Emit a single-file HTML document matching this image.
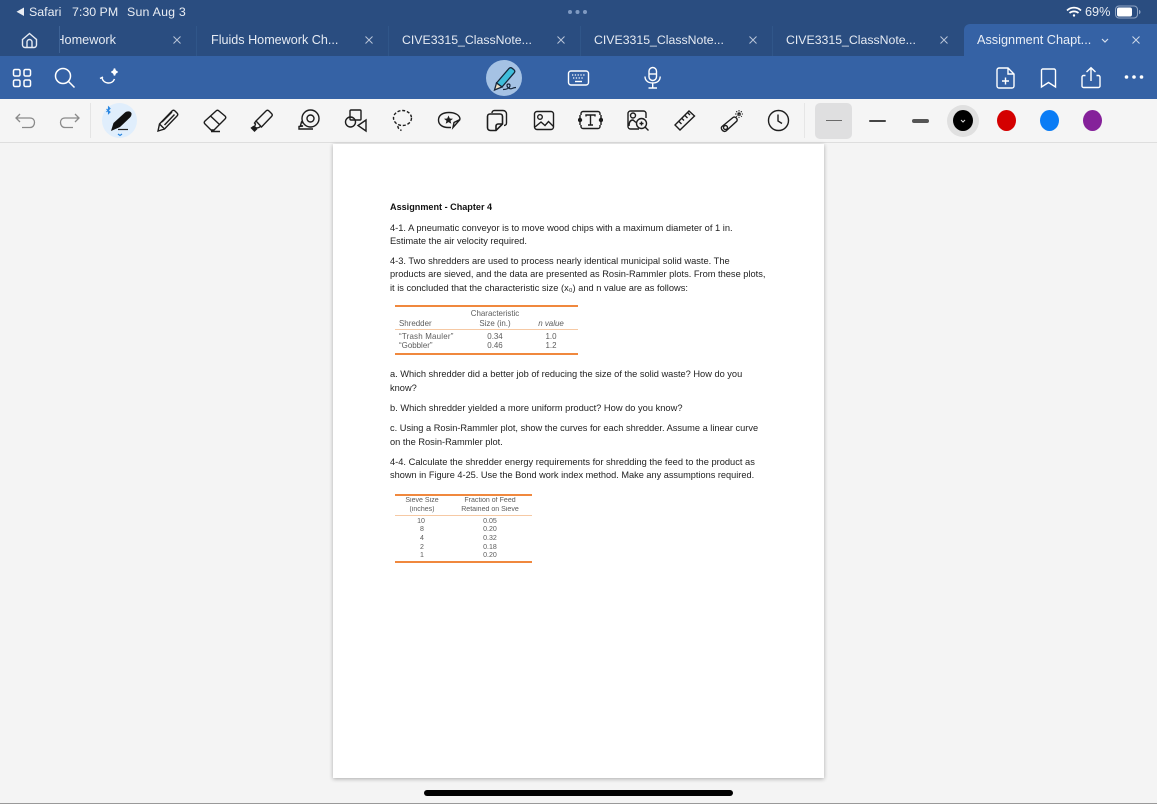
<!DOCTYPE html>
<html><head><meta charset="utf-8"><style>
html,body{margin:0;padding:0}
body{width:1157px;height:804px;position:relative;overflow:hidden;background:#f4f4f4;font-family:"Liberation Sans",sans-serif}
div,span,svg{position:absolute}
svg{filter:blur(.25px)}
.t{white-space:nowrap;color:#e9edf3;top:5px;font-size:12.4px;filter:blur(.2px)}
.tab{top:33px;font-size:12.6px;color:#e6ebf3;white-space:nowrap;filter:blur(.2px)}
.n{font-size:12.3px}
.x{top:36px}
.p{position:absolute;left:390px;font-size:9.27px;color:#222;white-space:nowrap;line-height:12px;filter:blur(.3px)}
.s{position:absolute;font-size:7.95px;color:#5c5c5c;white-space:nowrap;line-height:9px;filter:blur(.3px)}
.sm{font-size:7.05px}
.c{transform:translateX(-50%);text-align:center}
.o{position:absolute;background:#f0883e}
.ol{position:absolute;background:#f6c9a4}
</style></head><body>
<div style="left:0;top:0;width:1157px;height:56px;background:#2a4d80"></div>
<div style="left:0;top:56px;width:1157px;height:43px;background:#3562a5"></div>
<div style="left:0;top:99px;width:1157px;height:43px;background:#f5f5f5;border-bottom:1px solid #dedede"></div>
<div style="left:964px;top:24px;width:193px;height:32px;background:#3562a5;border-radius:6px 0 0 0"></div>

<svg style="left:16px;top:7px" width="9" height="10"><path d="M8 .5v8.500L.5 4.700z" fill="#e9edf3"/></svg>
<div class="t" style="left:29px">Safari</div>
<div class="t" style="left:72px">7:30 PM</div>
<div class="t" style="left:127px;letter-spacing:.2px">Sun Aug 3</div>
<svg style="left:565px;top:8px" width="26" height="8"><circle cx="5" cy="4" r="2" fill="#7f9ac2"/><circle cx="12.500" cy="4" r="2" fill="#7f9ac2"/><circle cx="20" cy="4" r="2" fill="#7f9ac2"/></svg>
<svg style="left:1066px;top:5px" width="16" height="13" fill="none" stroke="#fff" stroke-width="1.700"><path d="M1 5.500C5 1.700 11 1.700 15 5.500M3.500 8C6 5.800 10 5.800 12.500 8"/><circle cx="8" cy="10.500" r="1.200" fill="#fff" stroke="none"/></svg>
<div class="t" style="left:1085px;font-size:12.7px">69%</div>
<svg style="left:1115px;top:5px" width="27" height="14"><rect x=".5" y="1" width="22" height="12" rx="3.500" fill="none" stroke="#8fa4c3"/><rect x="2" y="2.500" width="15" height="9" rx="2" fill="#fff"/><path d="M24 5v4c1 0 1.500-1 1.500-2S25 5 24 5z" fill="#8fa4c3"/></svg>

<svg style="left:21px;top:32px" width="17" height="17" fill="none" stroke="#e6ebf3" stroke-width="1.400"><path d="M1.500 7.500 8.500 1.500 15.500 7.500V13a2.500 2.500 0 0 1-2.500 2.500H4A2.500 2.500 0 0 1 1.500 13zM6 15.500V10a2.500 2.500 0 0 1 5 0v5.500"/></svg>
<div style="left:59px;top:26px;width:1px;height:27px;background:#3e6396"></div>
<div class="tab" style="left:60px;width:56px;overflow:hidden;direction:rtl;font-size:12.7px">Homework</div>
<svg class="x" style="left:173px" width="8" height="8" stroke="#b9c5d8" stroke-width="1"><path d="M.5.5l7 7M7.500.5l-7 7"/></svg>
<div style="left:196px;top:26px;width:1px;height:30px;background:#305689"></div>
<div class="tab" style="left:211px">Fluids Homework Ch...</div>
<svg class="x" style="left:365px" width="8" height="8" stroke="#b9c5d8" stroke-width="1"><path d="M.5.5l7 7M7.500.5l-7 7"/></svg>
<div style="left:388px;top:26px;width:1px;height:30px;background:#305689"></div>
<div class="tab n" style="left:402px">CIVE3315_ClassNote...</div>
<svg class="x" style="left:557px" width="8" height="8" stroke="#b9c5d8" stroke-width="1"><path d="M.5.5l7 7M7.500.5l-7 7"/></svg>
<div style="left:580px;top:26px;width:1px;height:30px;background:#305689"></div>
<div class="tab n" style="left:594px">CIVE3315_ClassNote...</div>
<svg class="x" style="left:749px" width="8" height="8" stroke="#b9c5d8" stroke-width="1"><path d="M.5.5l7 7M7.500.5l-7 7"/></svg>
<div style="left:772px;top:26px;width:1px;height:30px;background:#305689"></div>
<div class="tab n" style="left:786px">CIVE3315_ClassNote...</div>
<svg class="x" style="left:940px" width="8" height="8" stroke="#b9c5d8" stroke-width="1"><path d="M.5.5l7 7M7.500.5l-7 7"/></svg>
<div class="tab" style="left:977px;color:#e9eef6;font-size:12.7px">Assignment Chapt...</div>
<svg style="left:1100px;top:37px" width="10" height="7" fill="none" stroke="#d7e0ee" stroke-width="1.200"><path d="M2 2l3 3 3-3"/></svg>
<svg class="x" style="left:1132px" width="8" height="8" stroke="#cdd8e8" stroke-width="1"><path d="M.5.5l7 7M7.500.5l-7 7"/></svg>

<svg style="left:12px;top:68px" width="20" height="20" fill="none" stroke="#fff" stroke-width="1.500"><rect x="1.500" y="1.500" width="6.500" height="6.500" rx="1.500"/><rect x="12" y="1.500" width="6.500" height="6.500" rx="1.500"/><rect x="1.500" y="12" width="6.500" height="6.500" rx="1.500"/><rect x="12" y="12" width="6.500" height="6.500" rx="1.500"/></svg>
<svg style="left:54px;top:67px" width="22" height="22" fill="none" stroke="#fff" stroke-width="1.500"><circle cx="9" cy="9" r="7.500"/><path d="M14.500 14.500l6 6"/></svg>
<svg style="left:98px;top:67px" width="22" height="20" fill="none" stroke="#fff" stroke-width="1.500"><path d="M2 11.500l3-1.500M4 11c1.500 6 10 7 12.500 1"/><path d="M16.500 1.500c.4 2.300 1 3 3 3.500-2 .5-2.600 1.200-3 3.500-.4-2.300-1-3-3-3.500 2-.5 2.600-1.200 3-3.500z" fill="#fff"/></svg>

<div style="left:486px;top:60px;width:36px;height:36px;border-radius:50%;background:#a5c2e4"></div>
<svg style="left:492px;top:64px" width="26" height="28"><path d="M4.500 19 17 4.500c1-1 2-1 3-.3l2 1.600c1 .9 1 2 .2 3L10 23z" fill="#3fbddb" stroke="#16263a" stroke-width="1.300"/><path d="M4.500 19l-2 7 7.500-3z" fill="#f1e2c4" stroke="#16263a" stroke-width="1.300"/><path d="M11 25.500c3 0 7-1 7-4 0-2-3-2-3 0s3 4 5 3 2-1 4-1" fill="none" stroke="#16263a" stroke-width="1.200"/></svg>
<svg style="left:567px;top:69px" width="23" height="18" fill="none" stroke="#fff" stroke-width="1.400"><rect x="1.500" y="2" width="20" height="14" rx="2.500"/><path d="M5 6h13M6 9h11" stroke-width="1.300" stroke-dasharray="1.300 1.500"/><path d="M8 12.500h7"/></svg>
<svg style="left:643px;top:66px" width="19" height="24" fill="none" stroke="#fff" stroke-width="1.400"><rect x="6" y="1.500" width="7.500" height="13" rx="3.700"/><path d="M6 8h7.500"/><path d="M2 10.500c0 4 3 6.500 7.700 6.500s7.500-2.500 7.500-6.500M9.700 17v4.500M5.500 22h8.500"/></svg>
<svg style="left:995px;top:66px" width="21" height="24" fill="none" stroke="#fff" stroke-width="1.400"><path d="M4 2h9l6 6v12a2 2 0 0 1-2 2H4a2 2 0 0 1-2-2V4a2 2 0 0 1 2-2zM13 2v6h6M10.500 11.500v7M7 15h7"/></svg>
<svg style="left:1039px;top:67px" width="19" height="22" fill="none" stroke="#fff" stroke-width="1.400"><path d="M3.500 2h11.500a1.500 1.500 0 0 1 1.500 1.500V20l-7-4.500L2.500 20V3.500A1.500 1.500 0 0 1 3.500 2z"/></svg>
<svg style="left:1080px;top:66px" width="22" height="23" fill="none" stroke="#fff" stroke-width="1.400"><path d="M11 15V2M6.500 6 11 1.700 15.500 6M5.500 9.500H3.500A1.500 1.500 0 0 0 2 11v9a1.500 1.500 0 0 0 1.500 1.500h15A1.500 1.500 0 0 0 20 20v-9a1.500 1.500 0 0 0-1.500-1.500h-2"/></svg>
<svg style="left:1124px;top:74px" width="20" height="6" fill="#fff"><circle cx="2.500" cy="3" r="1.800"/><circle cx="10" cy="3" r="1.800"/><circle cx="17.500" cy="3" r="1.800"/></svg>

<svg style="left:14px;top:112px" width="24" height="18" fill="none" stroke="#8a8a8a" stroke-width="1.300"><path d="M6 2 2 6l4 4M2 6h14c3 0 4.500 2 4.500 4.500S19 15.500 16 15.500H8"/></svg>
<svg style="left:57px;top:112px" width="24" height="18" fill="none" stroke="#8a8a8a" stroke-width="1.300"><path d="M18 2l4 4-4 4M22 6H8c-3 0-4.500 2-4.500 4.500S5 15.500 8 15.500h8"/></svg>
<div style="left:90px;top:103px;width:1px;height:35px;background:#e4e4e4"></div>
<div style="left:102px;top:103px;width:35px;height:35px;border-radius:50%;background:#e0eefc"></div>
<svg style="left:104px;top:104px" width="32" height="34"><path d="M2.500 5l3.500 3-1.500 1.500V3l1.500 1.500L2.500 8" fill="none" stroke="#2a86e0" stroke-width="1.100"/><path d="M7 27l2.500-8L21 8.500c2-1.800 6-1.500 6.500 1 .2 1.300-.5 2.800-1.500 4L16 23z" fill="#111"/><path d="M14 25.500h10" stroke="#222" stroke-width="1.200"/><path d="M14 30l2 1.500 2-1.500" fill="none" stroke="#2a86e0" stroke-width="1.200"/></svg>
<svg style="left:155px;top:108px" width="24" height="25" fill="none" stroke="#1d1d1d" stroke-width="1.400"><path d="M3 23l1.500-7L17 3c1-1 2-1 3 0l2 2c1 1 1 2 0 3L9.500 21zM4.500 16l5 5M7 14l10-10M9.500 17 19.500 6.500"/></svg>
<svg style="left:202px;top:108px" width="25" height="25" fill="none" stroke="#1d1d1d" stroke-width="1.400"><path d="M9 22 3 16c-1-1-1-2 0-3L14 3c1-1 2-1 3 0l6 5c1 1 1 2 0 3L12 22zM8.500 8l9 8.500M9 23.500h9"/></svg>
<svg style="left:249px;top:108px" width="25" height="25" fill="none" stroke="#1d1d1d" stroke-width="1.400"><path d="M7 13 17 3c1-1 2-1 3 0l2.500 2.500c1 1 1 2 0 3L12.500 19zM7 13l-1.500 2 1 1-1 3 2 1 2.500-.5.500-.5 1.500-.5"/><path d="M2.500 20l3 3 2-2-3-2.500z" fill="#1d1d1d"/></svg>
<svg style="left:297px;top:108px" width="24" height="24" fill="none" stroke="#1d1d1d" stroke-width="1.400"><circle cx="13.500" cy="10.500" r="8.500"/><circle cx="13.500" cy="10.500" r="3.500"/><path d="M6 15l-1.500-1-1 3.500L6 18l-4 .5V21h14"/></svg>
<svg style="left:344px;top:108px" width="24" height="25" fill="none" stroke="#1d1d1d" stroke-width="1.400"><rect x="6" y="2" width="11" height="10" rx="1"/><circle cx="6.500" cy="14" r="5"/><path d="M22 12v11l-8-5.500z"/></svg>
<svg style="left:391px;top:108px" width="23" height="25" fill="none" stroke="#1d1d1d" stroke-width="1.400" stroke-dasharray="3 1.800"><ellipse cx="11.500" cy="10" rx="9" ry="7.500"/><path d="M7 18c-.5 2 1 3 3.500 4.500"/></svg>
<svg style="left:437px;top:108px" width="25" height="24" fill="none" stroke="#1d1d1d" stroke-width="1.400"><path d="M14 19.500H11C6 19.500 1.500 17 1.500 12S6 4.500 12 4.500 23 7 23 11.500M23 11.500l-7 8 1-5z"/><path d="M11.500 7.500l1.300 3 3.200.2-2.500 2 .8 3-2.800-1.600L8.700 15.700l.8-3-2.500-2 3.200-.2z" fill="#1d1d1d" stroke="none"/></svg>
<svg style="left:486px;top:109px" width="22" height="23" fill="none" stroke="#1d1d1d" stroke-width="1.400"><path d="M6 4c0-1.500 1-2.500 2.500-2.500H17c2 0 3.500 1.500 3.500 3.500v9c0 1.500-1 2.500-2.500 2.500"/><path d="M4 5h10c1.500 0 2.500 1 2.500 2.500V15L10 21.500H4.500C2.500 21.500 1.500 20 1.500 18.500V7.500C1.500 6 2.500 5 4 5zM16.500 15H12c-1 0-2 1-2 2v4.500" stroke-width="1.600"/></svg>
<svg style="left:533px;top:110px" width="22" height="21" fill="none" stroke="#1d1d1d" stroke-width="1.400"><rect x="1.500" y="1.500" width="19" height="18" rx="2.500"/><circle cx="7" cy="7" r="2.300"/><path d="M2 17l6-5 4 3.500 3.500-4 5 5"/></svg>
<svg style="left:578px;top:110px" width="25" height="21" fill="none" stroke="#1d1d1d" stroke-width="1.400"><path d="M3 5V3.500A2 2 0 0 1 5 1.500h15a2 2 0 0 1 2 2V5M3 15v1.500a2 2 0 0 0 2 2h15a2 2 0 0 0 2-2V15M2 5v10M23 5v10M8 6.500V5h9v1.500M12.500 5v10M10 15h5"/><circle cx="2" cy="10" r="1.500" fill="#1d1d1d"/><circle cx="23" cy="10" r="1.500" fill="#1d1d1d"/></svg>
<svg style="left:626px;top:109px" width="24" height="23" fill="none" stroke="#1d1d1d" stroke-width="1.400"><path d="M13 20H4.500a2.500 2.500 0 0 1-2.500-2.500v-13A2.500 2.500 0 0 1 4.500 2h13A2.500 2.500 0 0 1 20 4.500V9"/><circle cx="7" cy="6.500" r="2.500"/><path d="M3 17c0-5 2-6 4-6l3 2.500"/><circle cx="15.500" cy="14.500" r="5"/><path d="M19 18l3.500 3.500M13.500 14.500h4M15.500 12.500v4"/></svg>
<svg style="left:673px;top:109px" width="23" height="23" fill="none" stroke="#1d1d1d" stroke-width="1.400"><path d="M2 16 16 2l5.500 5L7 21zM6 12.500l2.500 2.500M9 9.500l2 2M12 6.500l2.500 2.500M15 4l2 2"/></svg>
<svg style="left:719px;top:108px" width="26" height="26" fill="none" stroke="#1d1d1d" stroke-width="1.400"><path d="M3 18.500 14 9.500c1-.8 2.500-.6 3.500.7s.8 2.700-.3 3.500L7 23c-1 .8-2.800.4-3.800-.9S2 19.300 3 18.500z"/><circle cx="6.500" cy="19.500" r="2"/><path d="M20 2v8M16 6h8M17.200 3.200l5.600 5.600M22.800 3.200l-5.600 5.600" stroke-width="1" stroke-dasharray="1.500 .8"/></svg>
<svg style="left:767px;top:109px" width="23" height="23" fill="none" stroke="#1d1d1d" stroke-width="1.400"><circle cx="11.500" cy="11.500" r="10"/><path d="M11 5.500v6.500l4 2.500"/></svg>
<div style="left:804px;top:103px;width:1px;height:35px;background:#e6e6e6"></div>
<div style="left:815px;top:103px;width:37px;height:36px;border-radius:5px;background:#dfdfe0"></div>
<div style="left:826px;top:120px;width:16px;height:1px;background:#6a6a6a"></div>
<div style="left:869px;top:120px;width:17px;height:2px;border-radius:1px;background:#444"></div>
<div style="left:912px;top:119px;width:17px;height:4px;border-radius:2px;background:#555"></div>
<div style="left:947px;top:105px;width:32px;height:32px;border-radius:50%;background:#e0e0e0"></div>
<div style="left:953px;top:110px;width:20px;height:21px;border-radius:50%;background:#000"></div>
<svg style="left:959px;top:118px" width="8" height="6" fill="none" stroke="#ddd" stroke-width="1"><path d="M2 2l2 2 2-2"/></svg>
<div style="left:997px;top:110px;width:19px;height:21px;border-radius:50%;background:#d40000"></div>
<div style="left:1040px;top:110px;width:19px;height:21px;border-radius:50%;background:#0a7cf5"></div>
<div style="left:1083px;top:110px;width:19px;height:21px;border-radius:50%;background:#85219a"></div>

<div style="left:333px;top:144px;width:491px;height:634px;background:#fff;box-shadow:0 1px 4px rgba(0,0,0,.3)"></div>
<p class="p" style="margin:0;top:200.500px;font-weight:bold;color:#111;font-size:9.1px">Assignment - Chapter 4</p>
<p class="p" style="margin:0;top:221.500px;font-size:9.3px">4-1. A pneumatic conveyor is to move wood chips with a maximum diameter of 1 in.</p>
<p class="p" style="margin:0;top:234.500px">Estimate the air velocity required.</p>
<p class="p" style="margin:0;top:254.500px;font-size:9.3px">4-3. Two shredders are used to process nearly identical municipal solid waste. The</p>
<p class="p" style="margin:0;top:268px">products are sieved, and the data are presented as Rosin-Rammler plots. From these plots,</p>
<p class="p" style="margin:0;top:281.500px">it is concluded that the characteristic size (x₀) and n value are as follows:</p>

<div class="o" style="left:395px;top:305px;width:183px;height:2px"></div>
<div class="s c" style="left:495px;top:309px">Characteristic</div>
<div class="s" style="left:399px;top:319px">Shredder</div><div class="s c" style="left:495px;top:319px">Size (in.)</div><div class="s c" style="left:551px;top:319px;font-style:italic">n value</div>
<div class="ol" style="left:395px;top:329px;width:183px;height:1px"></div>
<div class="s" style="left:399px;top:332px;letter-spacing:.2px">“Trash Mauler”</div><div class="s c" style="left:495px;top:332px">0.34</div><div class="s c" style="left:551px;top:332px">1.0</div>
<div class="s" style="left:399px;top:341px">“Gobbler”</div><div class="s c" style="left:495px;top:341px">0.46</div><div class="s c" style="left:551px;top:341px">1.2</div>
<div class="o" style="left:395px;top:353px;width:183px;height:2px"></div>

<p class="p" style="margin:0;top:368px;font-size:9.25px">a. Which shredder did a better job of reducing the size of the solid waste? How do you</p>
<p class="p" style="margin:0;top:381.500px">know?</p>
<p class="p" style="margin:0;top:402px;font-size:9.3px">b. Which shredder yielded a more uniform product? How do you know?</p>
<p class="p" style="margin:0;top:422px;font-size:9.25px">c. Using a Rosin-Rammler plot, show the curves for each shredder. Assume a linear curve</p>
<p class="p" style="margin:0;top:435.500px">on the Rosin-Rammler plot.</p>
<p class="p" style="margin:0;top:455.500px;font-size:9.3px">4-4. Calculate the shredder energy requirements for shredding the feed to the product as</p>
<p class="p" style="margin:0;top:469px;font-size:9.2px">shown in Figure 4-25. Use the Bond work index method. Make any assumptions required.</p>

<div class="o" style="left:395px;top:494px;width:137px;height:2px"></div>
<div class="s sm c" style="left:422px;top:496px">Sieve Size</div><div class="s sm c" style="left:490px;top:496px">Fraction of Feed</div>
<div class="s sm c" style="left:422px;top:505px">(inches)</div><div class="s sm c" style="left:490px;top:505px">Retained on Sieve</div>
<div class="ol" style="left:395px;top:515px;width:137px;height:1px"></div>
<div class="s sm c" style="left:421px;top:517px">10</div><div class="s sm c" style="left:490px;top:517px">0.05</div>
<div class="s sm c" style="left:422px;top:525px">8</div><div class="s sm c" style="left:490px;top:525px">0.20</div>
<div class="s sm c" style="left:422px;top:534px">4</div><div class="s sm c" style="left:490px;top:534px">0.32</div>
<div class="s sm c" style="left:422px;top:543px">2</div><div class="s sm c" style="left:490px;top:543px">0.18</div>
<div class="s sm c" style="left:422px;top:551px">1</div><div class="s sm c" style="left:490px;top:551px">0.20</div>
<div class="o" style="left:395px;top:561px;width:137px;height:2px"></div>

<div style="left:424px;top:790px;width:309px;height:6px;border-radius:3px;background:#000"></div>
<div style="left:0;top:803px;width:1157px;height:1px;background:#999"></div>
</body></html>
